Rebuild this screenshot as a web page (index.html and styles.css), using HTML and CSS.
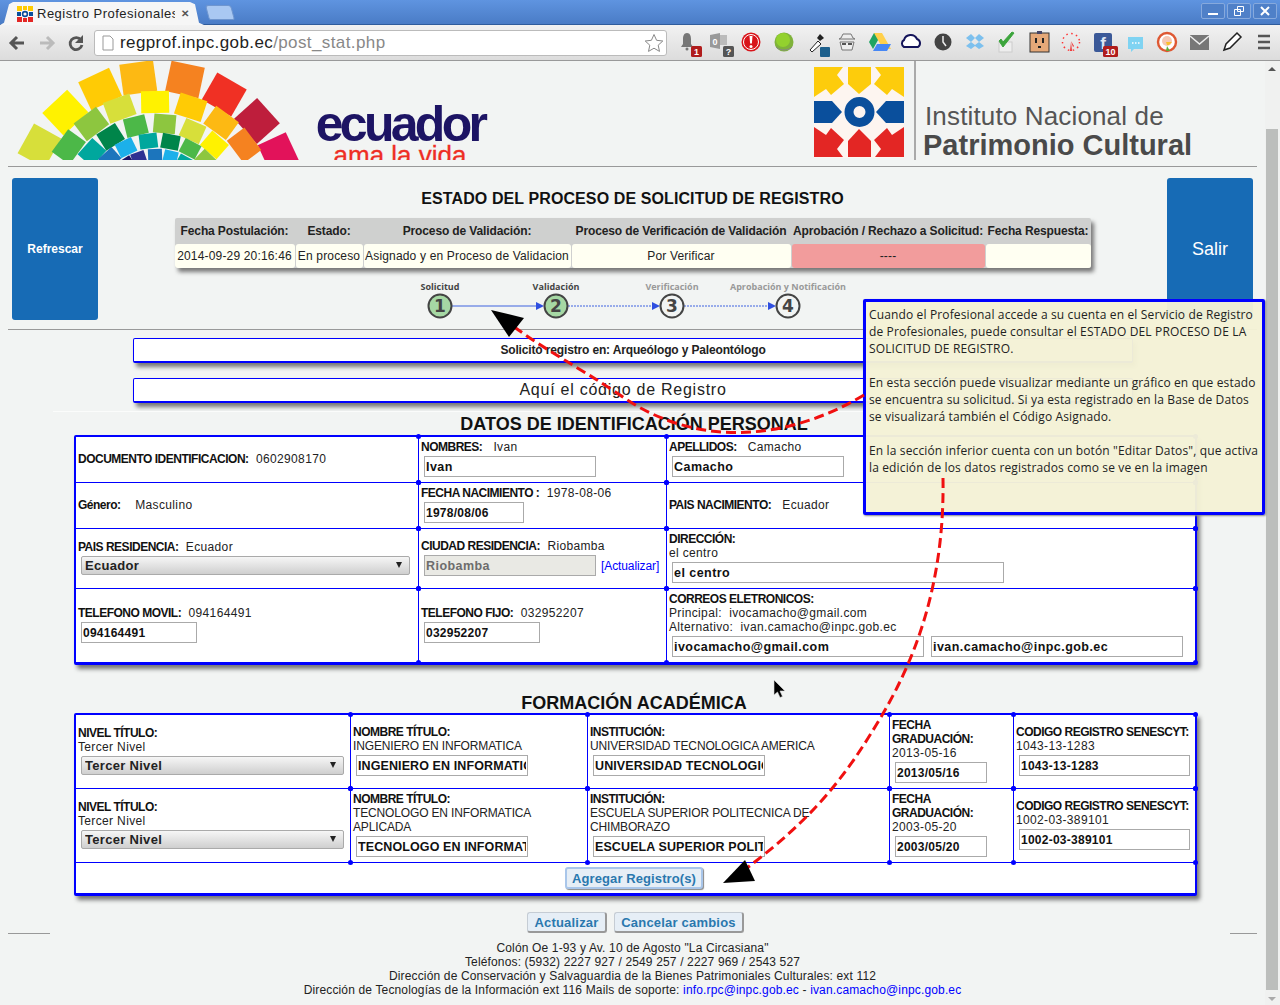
FILE: index.html
```html
<!DOCTYPE html>
<html lang="es">
<head>
    <meta charset="UTF-8">
    <title>Registro Profesionales</title>
    <link rel="stylesheet" href="styles.css">
</head>
<body>
    <div class="tabstrip">
        <div class="tab">
            <svg class="tab-icon" width="16" height="16" viewBox="0 0 16 16">
                <rect width="16" height="16" fill="#fdf5f0"/>
                <rect width="5" height="5" fill="#fc0"/><rect x="6" width="4" height="4" fill="#fc0"/><rect x="11" width="5" height="5" fill="#fc0"/>
                <rect y="6" width="4" height="4" fill="#0a4f9c"/><circle cx="8" cy="8" r="2.4" fill="none" stroke="#0a4f9c" stroke-width="1.6"/><rect x="12" y="6" width="4" height="4" fill="#0a4f9c"/>
                <rect y="11" width="5" height="5" fill="#e32624"/><rect x="6" y="12" width="4" height="4" fill="#e32624"/><rect x="11" y="11" width="5" height="5" fill="#e32624"/>
            </svg>
            <span class="tab-title">Registro Profesionales</span>
            <span class="tab-close">&#10005;</span>
        </div>
        <div class="newtab"></div>
        <div class="winbtns">
            <div class="winbtn"><svg width="12" height="12" viewBox="0 0 12 12"><rect x="1" y="8" width="10" height="2" fill="#fff"/></svg></div>
            <div class="winbtn"><svg width="12" height="12" viewBox="0 0 12 12"><path d="M4.5 1.5h6v5h-6zM1.5 4.5h6v6h-6z" fill="none" stroke="#fff"/></svg></div>
            <div class="winbtn"><svg width="12" height="12" viewBox="0 0 12 12"><path d="M2 2l8 8M10 2l-8 8" stroke="#fff" stroke-width="2"/></svg></div>
        </div>
    </div>

    <div class="toolbar">
        <svg class="nav-icons" width="94" height="24" viewBox="0 0 94 24">
            <path d="M24 12H12M17 6l-6 6 6 6" fill="none" stroke="#555" stroke-width="3"/>
            <path d="M40 12h12M47 6l6 6-6 6" fill="none" stroke="#bbb" stroke-width="3"/>
            <path d="M81 9a6 6 0 1 0 1 5" fill="none" stroke="#555" stroke-width="2.8"/>
            <path d="M83 4v8h-8z" fill="#555"/>
        </svg>
        <div class="omnibox">
            <svg width="12" height="16" viewBox="0 0 12 16"><path d="M1 1h7l3 3v11H1z" fill="#fff" stroke="#999"/></svg>
            <span class="url">regprof.inpc.gob.ec<span class="url-path">/post_stat.php</span></span>
            <svg class="star" width="20" height="20" viewBox="0 0 20 20"><path d="M10 1.5l2.6 5.8 6.2.7-4.6 4.2 1.3 6.2L10 15.2l-5.5 3.2 1.3-6.2L1.200 8l6.200-.7z" fill="#fff" stroke="#888"/></svg>
        </div>
        <svg class="ext-icons" width="608" height="36" viewBox="672 25 608 36">
            <!-- bell -->
            <path d="M687 33c-3 0-4 3-4 6v5l-2 3h12l-2-3v-5c0-3-1-6-4-6z" fill="#777"/><circle cx="687" cy="49" r="1.500" fill="#777"/>
            <rect x="691" y="46" width="11" height="11" rx="1.500" fill="#b01c1c"/><text x="696.500" y="55" class="badge-txt">1</text>
            <!-- outlook -->
            <path d="M710 35l10-2v16l-10-2z" fill="#999"/><rect x="720" y="35" width="7" height="10" fill="#bbb"/><text x="715" y="45" class="badge-txt" fill="#eee">0</text>
            <rect x="723" y="46" width="11" height="11" rx="1.500" fill="#555"/><text x="728.500" y="55" class="badge-txt">?</text>
            <!-- alert -->
            <circle cx="751" cy="42" r="9.500" fill="#d8141a"/><circle cx="751" cy="42" r="7.500" fill="none" stroke="#fff"/><path d="M749.500 36h3l-.6 7.500h-1.800z" fill="#fff"/><circle cx="751" cy="46.500" r="1.500" fill="#fff"/>
            <!-- green ball -->
            <circle cx="784" cy="42" r="9.500" fill="#7fb23a"/><circle cx="783" cy="40" r="7" fill="#93d12e"/><path d="M776 47c4 4 12 4 16 0" fill="none" stroke="#888"/>
            <!-- eyedropper -->
            <path d="M810 50l8-9 3 3-9 8z" fill="#fff" stroke="#222"/><path d="M817 38l3-4 4 4-4 3z" fill="#222"/><rect x="820" y="47" width="10" height="10" rx="1" fill="#1c5f8c"/>
            <!-- spy -->
            <path d="M841 38l2-4h8l2 4 2 1h-16zM840 42h14l-2 8h-10z" fill="#eee" stroke="#777"/><path d="M842 43h4v2h-4zM848 43h4v2h-4z" fill="#555"/>
            <!-- drive -->
            <path d="M874 33h8l-9 16-4-7z" fill="#1fa463"/><path d="M882 33l9 16h-8l-9-16z" fill="#ffd04b"/><path d="M873 51l4-7h14l-4 7z" fill="#4687f4"/>
            <!-- cloud -->
            <path d="M904 47a4 4 0 0 1 0-7 7 7 0 0 1 13-1 4.500 4.500 0 0 1 1 8z" fill="#fff" stroke="#14145a" stroke-width="2"/>
            <!-- clock -->
            <circle cx="943" cy="42" r="8.500" fill="#444"/><path d="M943 36v6l3 4" fill="none" stroke="#eee" stroke-width="1.500"/>
            <!-- dropbox -->
            <path d="M971 34l-5 4 5 4-5 4 5 3 4-3 4 3 5-3-5-4 5-4-5-4-4 4zM971 42l4-4 4 4-4 3z" fill="#7cc0ee"/>
            <!-- check -->
            <rect x="999" y="42" width="13" height="10" fill="#eee" stroke="#ccc"/><path d="M999 41l4 6 11-14-2-1-9 10-2-3z" fill="#3ca53c" stroke="#3ca53c"/>
            <!-- outlet -->
            <rect x="1030" y="33" width="19" height="19" fill="#e5a878" stroke="#333"/><rect x="1037" y="31" width="5" height="3" fill="#446"/><rect x="1035" y="38" width="2" height="5" fill="#222"/><rect x="1042" y="38" width="2" height="5" fill="#222"/><path d="M1038 46h3v2h-3z" fill="#222"/>
            <!-- red clock -->
            <circle cx="1071" cy="42" r="8.500" fill="none" stroke="#f33" stroke-width="1.500" stroke-dasharray="1.500 3.500"/><path d="M1071 42l-1 9h2zM1071 41l3 5-1 1z" fill="#e33"/>
            <!-- facebook -->
            <rect x="1094" y="33" width="18" height="19" rx="2" fill="#3b5998"/><text x="1103" y="49" class="fb-txt">f</text>
            <rect x="1103" y="46" width="15" height="11" rx="1.500" fill="#b01c1c"/><text x="1110.500" y="55" class="badge-txt">10</text>
            <!-- chat -->
            <path d="M1128 37h15v12h-9l-3 3v-3h-3z" fill="#7fd3f2"/><path d="M1132 43h1.500M1135 43h1.500M1138 43h1.500" stroke="#fff" stroke-width="1.500"/>
            <!-- duck -->
            <circle cx="1167" cy="42" r="9" fill="#fff" stroke="#de5833" stroke-width="2.400"/><circle cx="1167" cy="41" r="5" fill="#f6c8b4"/><path d="M1166 42h6l-3 3h-2z" fill="#fbc02d"/><path d="M1167 46l3 5h-4z" fill="#5cae3a"/>
            <!-- mail -->
            <rect x="1190" y="35" width="19" height="15" fill="#777"/><path d="M1190 36l9.500 8 9.500-8" fill="none" stroke="#eee" stroke-width="1.500"/>
            <!-- pen -->
            <path d="M1224 50l2-6 11-11 4 4-11 11z" fill="#fff" stroke="#222" stroke-width="1.500"/>
            <!-- menu -->
            <path d="M1258 36h12M1258 42h12M1258 48h12" stroke="#555" stroke-width="2.500"/>
        </svg>
    </div>

    <div class="viewport">
        <div class="page">
            <header class="site-head">
                <svg class="fan" width="300" height="99" viewBox="0 61 300 99">
                    <g>
                        <rect x="140" y="61" width="34" height="31" fill="#d7df3a" transform="rotate(-61 157 211)"/>
                        <rect x="140" y="61" width="34" height="31" fill="#fff200" transform="rotate(-43 157 211)"/>
                        <rect x="140" y="61" width="34" height="31" fill="#ffcb05" transform="rotate(-25 157 211)"/>
                        <rect x="140" y="61" width="34" height="31" fill="#fdb913" transform="rotate(-8 157 211)"/>
                        <rect x="140" y="61" width="34" height="31" fill="#f58220" transform="rotate(12 157 211)"/>
                        <rect x="140" y="61" width="34" height="31" fill="#f03024" transform="rotate(30 157 211)"/>
                        <rect x="140" y="61" width="34" height="31" fill="#be1e3c" transform="rotate(48 157 211)"/>
                        <rect x="140" y="61" width="34" height="31" fill="#e2125a" transform="rotate(65 157 211)"/>

                        <rect x="143" y="91" width="28" height="22" fill="#4cb848" transform="rotate(-54 157 211)"/>
                        <rect x="143" y="91" width="28" height="22" fill="#8dc63f" transform="rotate(-37 157 211)"/>
                        <rect x="143" y="91" width="28" height="22" fill="#d7df3a" transform="rotate(-20 157 211)"/>
                        <rect x="143" y="91" width="28" height="22" fill="#fff200" transform="rotate(-1 157 211)"/>
                        <rect x="143" y="91" width="28" height="22" fill="#ffcb05" transform="rotate(18 157 211)"/>
                        <rect x="143" y="91" width="28" height="22" fill="#fdb913" transform="rotate(36 157 211)"/>
                        <rect x="143" y="91" width="28" height="22" fill="#f58220" transform="rotate(53 157 211)"/>

                        <rect x="146" y="114" width="22" height="19" fill="#00a79d" transform="rotate(-48 157 211)"/>
                        <rect x="146" y="114" width="22" height="19" fill="#00854a" transform="rotate(-32 157 211)"/>
                        <rect x="146" y="114" width="22" height="19" fill="#4cb848" transform="rotate(-14 157 211)"/>
                        <rect x="146" y="114" width="22" height="19" fill="#8dc63f" transform="rotate(5 157 211)"/>
                        <rect x="146" y="114" width="22" height="19" fill="#d7df3a" transform="rotate(24 157 211)"/>
                        <rect x="146" y="114" width="22" height="19" fill="#fff200" transform="rotate(41 157 211)"/>

                        <rect x="148" y="133" width="18" height="15" fill="#1c75bc" transform="rotate(-42 157 211)"/>
                        <rect x="148" y="133" width="18" height="15" fill="#1cb0ea" transform="rotate(-26 157 211)"/>
                        <rect x="148" y="133" width="18" height="15" fill="#00a79d" transform="rotate(-7 157 211)"/>
                        <rect x="148" y="133" width="18" height="15" fill="#00854a" transform="rotate(11 157 211)"/>
                        <rect x="148" y="133" width="18" height="15" fill="#4cb848" transform="rotate(28 157 211)"/>
                        <rect x="148" y="133" width="18" height="15" fill="#8dc63f" transform="rotate(44 157 211)"/>
                        <rect x="148" y="133" width="18" height="15" fill="#ffcb05" transform="rotate(58 157 211)"/>

                        <rect x="150" y="149" width="14" height="12" fill="#1b1464" transform="rotate(-33 157 211)"/>
                        <rect x="150" y="149" width="14" height="12" fill="#2e3192" transform="rotate(-19 157 211)"/>
                        <rect x="150" y="149" width="14" height="12" fill="#1c75bc" transform="rotate(-2 157 211)"/>
                        <rect x="150" y="149" width="14" height="12" fill="#1cb0ea" transform="rotate(14 157 211)"/>
                        <rect x="150" y="149" width="14" height="12" fill="#00a79d" transform="rotate(29 157 211)"/>
                    </g>
                </svg>
                <div class="brand">
                    <div class="brand-name">ecuador</div>
                    <div class="brand-tag">ama la vida</div>
                </div>
                <svg class="inpc-logo" width="90" height="91" viewBox="814 67 90 91">
                    <rect x="814" y="67" width="90" height="91" fill="#fdf5f0"/>
                    <g fill="#fdcc0c">
                        <polygon points="814,67 843,67 837,75 844,84 831,95 826,89 814,97"/>
                        <polygon points="848,67 871,67 871,84 859,94 848,84"/>
                        <polygon points="904,67 875,67 881,75 874,84 887,95 892,89 904,97"/>
                    </g>
                    <g fill="#0a4f9c">
                        <polygon points="814,101 832,101 842,112 832,123 814,123"/>
                        <polygon points="904,101 886,101 876,112 886,123 904,123"/>
                    </g>
                    <circle cx="859.500" cy="112" r="10.500" fill="none" stroke="#0a4f9c" stroke-width="9"/>
                    <g fill="#e32624">
                        <polygon points="814,157 843,157 837,149 844,140 831,128 826,135 814,127"/>
                        <polygon points="859,129 871,141 871,157 848,157 848,141"/>
                        <polygon points="904,157 875,157 881,149 874,140 887,128 892,135 904,127"/>
                    </g>
                </svg>
                <div class="inpc-name">
                    <div class="inpc-line1">Instituto Nacional de</div>
                    <div class="inpc-line2">Patrimonio Cultural</div>
                </div>
            </header>
            <hr class="rule rule-head">

            <section class="status-row">
                <a class="big-btn big-btn-small">Refrescar</a>
                <div class="status-mid">
                    <h2 class="status-title">ESTADO DEL PROCESO DE SOLICITUD DE REGISTRO</h2>
                    <div class="status-table">
                        <div class="st-head">Fecha Postulación:</div>
                        <div class="st-head">Estado:</div>
                        <div class="st-head">Proceso de Validación:</div>
                        <div class="st-head">Proceso de Verificación de Validación</div>
                        <div class="st-head">Aprobación / Rechazo a Solicitud:</div>
                        <div class="st-head">Fecha Respuesta:</div>
                        <div class="st-cell">2014-09-29 20:16:46</div>
                        <div class="st-cell">En proceso</div>
                        <div class="st-cell">Asignado y en Proceso de Validacion</div>
                        <div class="st-cell">Por Verificar</div>
                        <div class="st-cell st-cell-red">----</div>
                        <div class="st-cell"></div>
                    </div>
                    <svg class="steps" width="461" height="44" viewBox="402 276 461 44">
                        <text x="440" y="290" class="step-label">Solicitud</text>
                        <text x="556" y="290" class="step-label">Validación</text>
                        <text x="672" y="290" class="step-label step-label-off">Verificación</text>
                        <text x="788" y="290" class="step-label step-label-off">Aprobación y Notificación</text>
                        <path d="M452 306h84" stroke="#3f62e0" stroke-width="1.200"/>
                        <path d="M568 306h84M684 306h84" stroke="#3f62e0" stroke-dasharray="2 1"/>
                        <path d="M536 302l8 4-8 4zM652 302l8 4-8 4zM768 302l8 4-8 4z" fill="#2f4fe0"/>
                        <circle cx="440" cy="306" r="11.500" class="step-done"/>
                        <circle cx="556" cy="306" r="11.500" class="step-done"/>
                        <circle cx="672" cy="306" r="11.500" class="step-todo"/>
                        <circle cx="788" cy="306" r="11.500" class="step-todo"/>
                        <text x="440" y="312" class="step-num">1</text>
                        <text x="556" y="312" class="step-num">2</text>
                        <text x="672" y="312" class="step-num">3</text>
                        <text x="788" y="312" class="step-num">4</text>
                    </svg>
                </div>
                <a class="big-btn">Salir</a>
            </section>
            <hr class="rule rule-status">

            <div class="info-box info-box-small">Solicitó registro en: Arqueólogo y Paleontólogo</div>
            <div class="info-box info-box-code">Aquí el código de Registro</div>
            <hr class="rule-faint">

            <h2 class="sec-title">DATOS DE IDENTIFICACIÓN PERSONAL</h2>
            <div class="grid-box grid-personal">
                <div class="cell"><p><b>DOCUMENTO IDENTIFICACION:</b>&nbsp;&nbsp;0602908170</p></div>
                <div class="cell"><p><b>NOMBRES:</b>&nbsp;&nbsp; Ivan</p><input class="w172" value="Ivan"></div>
                <div class="cell"><p><b>APELLIDOS:</b>&nbsp;&nbsp; Camacho</p><input class="w172" value="Camacho"></div>

                <div class="cell"><p><b>Género:</b>&nbsp;&nbsp;&nbsp; Masculino</p></div>
                <div class="cell"><p><b>FECHA NACIMIENTO :</b>&nbsp;&nbsp;1978-08-06</p><input class="w100 tight" value="1978/08/06"></div>
                <div class="cell"><p><b>PAIS NACIMIENTO:</b>&nbsp;&nbsp; Ecuador</p></div>

                <div class="cell"><p><b>PAIS RESIDENCIA:</b>&nbsp;&nbsp;Ecuador</p><div class="select-wrap w329"><select><option>Ecuador</option></select></div></div>
                <div class="cell"><p><b>CIUDAD RESIDENCIA:</b>&nbsp;&nbsp;Riobamba</p><div class="inline"><input class="w172" value="Riobamba" disabled><a class="link">[Actualizar]</a></div></div>
                <div class="cell"><p><b>DIRECCIÓN:</b></p><p>el centro</p><input class="w332" value="el centro"></div>

                <div class="cell"><p><b>TELEFONO MOVIL:</b>&nbsp;&nbsp;094164491</p><input class="w116 tight" value="094164491"></div>
                <div class="cell"><p><b>TELEFONO FIJO:</b>&nbsp;&nbsp;032952207</p><input class="w116 tight" value="032952207"></div>
                <div class="cell"><p><b>CORREOS ELETRONICOS:</b></p><p>Principal:&nbsp; ivocamacho@gmail.com</p><p>Alternativo:&nbsp; ivan.camacho@inpc.gob.ec</p><div class="inline inline-mails"><input class="w252" value="ivocamacho@gmail.com"><input class="w252" value="ivan.camacho@inpc.gob.ec"></div></div>
            </div>

            <h2 class="sec-title sec-title-2">FORMACIÓN ACADÉMICA</h2>
            <div class="grid-box grid-academic">
                <div class="cell"><p><b>NIVEL TÍTULO:</b></p><p>Tercer Nivel</p><div class="select-wrap w263"><select><option>Tercer Nivel</option></select></div></div>
                <div class="cell"><p><b>NOMBRE TÍTULO:</b></p><p class="caps">INGENIERO EN INFORMATICA</p><input class="w172" value="INGENIERO EN INFORMATICA"></div>
                <div class="cell"><p><b>INSTITUCIÓN:</b></p><p class="caps">UNIVERSIDAD TECNOLOGICA AMERICA</p><input class="w172" value="UNIVERSIDAD TECNOLOGICA AMERICA"></div>
                <div class="cell"><p><b>FECHA GRADUACIÓN:</b></p><p>2013-05-16</p><input class="w92 tight" value="2013/05/16"></div>
                <div class="cell"><p><b>CODIGO REGISTRO SENESCYT:</b></p><p>1043-13-1283</p><input class="w171 tight" value="1043-13-1283"></div>

                <div class="cell"><p><b>NIVEL TÍTULO:</b></p><p>Tercer Nivel</p><div class="select-wrap w263"><select><option>Tercer Nivel</option></select></div></div>
                <div class="cell"><p><b>NOMBRE TÍTULO:</b></p><p class="caps">TECNOLOGO EN INFORMATICA APLICADA</p><input class="w172" value="TECNOLOGO EN INFORMATICA APLICADA"></div>
                <div class="cell"><p><b>INSTITUCIÓN:</b></p><p class="caps">ESCUELA SUPERIOR POLITECNICA DE CHIMBORAZO</p><input class="w172" value="ESCUELA SUPERIOR POLITECNICA"></div>
                <div class="cell"><p><b>FECHA GRADUACIÓN:</b></p><p>2003-05-20</p><input class="w92 tight" value="2003/05/20"></div>
                <div class="cell"><p><b>CODIGO REGISTRO SENESCYT:</b></p><p>1002-03-389101</p><input class="w171 tight" value="1002-03-389101"></div>

                <div class="add-row"><button class="btn btn-add">Agregar Registro(s)</button></div>
            </div>

            <div class="actions">
                <button class="btn">Actualizar</button>
                <button class="btn">Cancelar cambios</button>
            </div>
            <div class="foot-rules"><hr class="rule rule-short"><hr class="rule rule-short rule-short-r"></div>
            <footer class="site-foot">
                <p>Colón Oe 1-93 y Av. 10 de Agosto "La Circasiana"</p>
                <p>Teléfonos: (5932) 2227 927 / 2549 257 / 2227 969 / 2543 527</p>
                <p>Dirección de Conservación y Salvaguardia de la Bienes Patrimoniales Culturales: ext 112</p>
                <p>Dirección de Tecnologías de la Información ext 116 Mails de soporte: <a class="link">info.rpc@inpc.gob.ec</a> - <a class="link">ivan.camacho@inpc.gob.ec</a></p>
            </footer>
        </div>
        <div class="scrollbar">
            <span class="sb-up"></span>
            <div class="sb-thumb"></div>
            <span class="sb-down"></span>
        </div>

        <div class="note">
            <p>Cuando el Profesional accede a su cuenta en el Servicio de Registro<br>de Profesionales, puede consultar el ESTADO DEL PROCESO DE LA<br>SOLICITUD DE REGISTRO.</p>
            <p>En esta sección puede visualizar mediante un gráfico en que estado<br>se encuentra su solicitud. Si ya esta registrado en la Base de Datos<br>se visualizará también el Código Asignado.</p>
            <p>En la sección inferior cuenta con un botón "Editar Datos", que activa<br>la edición de los datos registrados como se ve en la imagen</p>
        </div>

        <svg class="callouts" width="1280" height="944" viewBox="0 61 1280 944">
            <path d="M864 395C780 445 690 445 620 395C580 368 545 350 513 326" class="callout-line"/>
            <polygon points="491,310 524,318 509,337"/>
            <path d="M943 478C945 600 905 680 870 735C830 800 790 835 747 868" class="callout-line"/>
            <polygon points="745,860 755,881 723,883"/>
            <path d="M774 680v15l3.500-3 2.500 5.500 2.500-1-2.500-5.500h5z" fill="#000" stroke="#ddd" stroke-width=".6"/>
        </svg>
    </div>
</body>
</html>
```

FILE: styles.css
```css
* {
    box-sizing: border-box;
}
html, body {
    height: 1005px;
    overflow: hidden;
}
body {
    margin: 0;
    font-family: "Liberation Sans", Arial, sans-serif;
    font-size: 12px;
    color: #222;
    background-color: #f2f4f3;
}
p {
    margin: 0;
}

/* browser chrome */
.tabstrip {
    display: flex;
    align-items: flex-end;
    height: 25px;
    background: linear-gradient(#5f94e0, #4a7cc6);
    border-bottom: 1px solid #2f5c9c;
}
.tab {
    display: flex;
    align-items: center;
    width: 204px;
    height: 23px;
    margin-bottom: -1px;
    padding: 0 15px 0 17px;
    background-color: #f6f6f6;
    clip-path: polygon(0 100%, 4px 90%, 9px 10%, 13px 0, 190px 0, 195px 10%, 199px 90%, 204px 100%);
    font-size: 13px;
    color: #222;
}
.tab-icon {
    flex: none;
    margin-right: 4px;
}
.tab-title {
    flex: 1;
    overflow: hidden;
    white-space: nowrap;
    letter-spacing: .5px;
}
.tab-close {
    margin-left: 6px;
    font-size: 10px;
    font-weight: bold;
    color: #555;
}
.newtab {
    width: 26px;
    height: 15px;
    margin: 0 0 4px 3px;
    background-color: #a9c8f2;
    border: 1px solid #6f96cf;
    border-radius: 3px 3px 2px 2px;
    transform: skewX(15deg);
}
.winbtns {
    display: flex;
    gap: 2px;
    margin: 0 3px 5px auto;
}
.winbtn {
    display: flex;
    align-items: center;
    justify-content: center;
    width: 24px;
    height: 16px;
    border: 1px solid #86a9dd;
    border-radius: 2px;
    background-color: #4f80c8;
}
.toolbar {
    display: flex;
    align-items: center;
    height: 36px;
    background: linear-gradient(#f2f2f2, #dcdcdc);
    border-bottom: 1px solid #999;
}
.nav-icons {
    flex: none;
}
.omnibox {
    display: flex;
    align-items: center;
    width: 573px;
    height: 26px;
    padding: 0 2px 0 7px;
    background-color: #fff;
    border: 1px solid #bbb;
    border-radius: 3px;
}
.url {
    flex: 1;
    margin-left: 6px;
    font-size: 17px;
    letter-spacing: .4px;
    color: #222;
}
.url-path {
    color: #888;
}
.ext-icons {
    flex: none;
    margin-left: 5px;
}
.badge-txt {
    font: bold 9px "Liberation Sans", sans-serif;
    fill: #fff;
    text-anchor: middle;
}
.fb-txt {
    font: bold 17px "Liberation Sans", sans-serif;
    fill: #dfe6f3;
    text-anchor: middle;
}

/* page */
.viewport {
    position: relative;
    display: flex;
    height: 944px;
}
.page {
    flex: none;
    width: 1265px;
    height: 944px;
    overflow: hidden;
}
.scrollbar {
    position: relative;
    width: 15px;
    background-color: #f0f1f0;
}
.sb-thumb {
    position: absolute;
    top: 68px;
    left: 1px;
    width: 12px;
    height: 861px;
    background-color: #bcbebc;
}
.sb-up, .sb-down {
    position: absolute;
    left: 3px;
    border-left: 4px solid transparent;
    border-right: 4px solid transparent;
}
.sb-up {
    top: 6px;
    border-bottom: 4px solid #555;
}
.sb-down {
    bottom: 4px;
    border-top: 4px solid #aaa;
}

.site-head {
    display: flex;
    align-items: flex-start;
    height: 99px;
    overflow: hidden;
}
.fan {
    flex: none;
}
.brand {
    width: 200px;
    margin-left: 16px;
    padding-top: 40px;
    text-align: center;
}
.brand-name {
    font-size: 50px;
    font-weight: bold;
    line-height: 46px;
    letter-spacing: -3.700px;
    color: #1d1464;
    transform: translateX(-16px);
}
.brand-tag {
    margin-top: -4px;
    font-size: 26px;
    line-height: 24px;
    color: #ee2e24;
    -webkit-text-stroke: .3px #ee2e24;
    transform: translateX(-16px);
}
.inpc-logo {
    flex: none;
    margin: 6px 0 0 298px;
}
.inpc-name {
    height: 99px;
    margin-left: 10px;
    padding: 40px 0 0 9px;
    border-left: 2px solid #aaa;
    color: #555;
    white-space: nowrap;
}
.inpc-line1 {
    font-size: 26px;
    line-height: 30px;
    letter-spacing: .15px;
}
.inpc-line2 {
    margin-left: -2px;
    font-size: 29px;
    font-weight: bold;
    line-height: 29px;
    color: #4a4a4a;
}

.rule {
    height: 1px;
    margin: 0;
    border: 0;
    background-color: #999;
}
.rule-head {
    margin: 6px 8px 0;
}
.rule-status {
    margin: 9px 8px 0;
}
.rule-faint {
    width: 1100px;
    height: 1px;
    margin: 8px 0 0 53px;
    border: 0;
    background-color: #fbfcfb;
}

.status-row {
    display: flex;
    height: 142px;
    margin: 11px 12px 0;
}
.big-btn {
    display: flex;
    flex: none;
    align-items: center;
    justify-content: center;
    width: 86px;
    background-color: #176bb5;
    border-radius: 3px;
    color: #fff;
    font-size: 18px;
}
.big-btn-small {
    font-size: 12px;
    font-weight: bold;
}
.status-mid {
    flex: 1;
    display: flex;
    flex-direction: column;
    align-items: center;
}
.status-title {
    margin: 12px 0 0;
    font-size: 16px;
    line-height: 18px;
    letter-spacing: .1px;
    color: #111;
}
.status-table {
    display: grid;
    grid-template-columns: 120px 67px 207px 219px 193px 105px;
    grid-template-rows: 26px 24px;
    column-gap: 1px;
    margin-top: 10px;
    background-color: #cfd0cf;
    box-shadow: 3px 4px 4px #777;
    border-radius: 2px;
}
.st-head {
    display: flex;
    align-items: center;
    justify-content: center;
    font-weight: bold;
    letter-spacing: -.12px;
    white-space: nowrap;
}
.st-cell {
    display: flex;
    align-items: center;
    justify-content: center;
    background-color: #fffff2;
    border-radius: 3px;
    letter-spacing: .17px;
    white-space: nowrap;
}
.st-cell-red {
    background-color: #f29c9c;
}
.steps {
    margin-top: 8px;
}
.step-label {
    font: bold 9px "Open Sans", sans-serif;
    fill: #444;
    text-anchor: middle;
}
.step-label-off {
    fill: #999;
}
.step-done, .step-todo {
    stroke: #444;
    stroke-width: 2;
}
.step-done {
    fill: #a6d8a4;
}
.step-todo {
    fill: #f2f4f3;
}
.step-num {
    font: bold 17px "DejaVu Sans", sans-serif;
    fill: #444;
    text-anchor: middle;
}

.info-box {
    display: flex;
    align-items: center;
    justify-content: center;
    width: 1000px;
    height: 25px;
    margin-left: 133px;
    background-color: #fff;
    border: 1px solid #00f;
    border-bottom-width: 2px;
    border-radius: 2px;
    box-shadow: 3px 4px 4px #777;
}
.info-box-small {
    margin-top: 8px;
    font-weight: bold;
    letter-spacing: -.15px;
}
.info-box-code {
    margin-top: 15px;
    padding-right: 20px;
    font-size: 16px;
    letter-spacing: .75px;
}

.sec-title {
    margin: 2px 0 1px;
    padding-left: 3px;
    font-size: 18px;
    line-height: 20px;
    text-align: center;
    color: #111;
}
.sec-title-2 {
    margin: 28px 0 0;
}
.grid-box {
    display: grid;
    width: 1123px;
    margin-left: 74px;
    background-color: #fff;
    border: 2px solid #00f;
    border-bottom-width: 3px;
    border-radius: 2px;
    box-shadow: 3px 4px 4px #777;
}
.grid-personal {
    grid-template-columns: 343px 248px 1fr;
    grid-template-rows: 46px 46px 60px 73px;
}
.grid-academic {
    grid-template-columns: 275px 237px 302px 124px 1fr;
    grid-template-rows: 74px 74px 30px;
}
.cell {
    position: relative;
    display: flex;
    flex-direction: column;
    justify-content: center;
    align-items: flex-start;
    padding: 0 2px 2px 2px;
    border-right: 1px solid #00f;
    border-bottom: 1px solid #00f;
    line-height: 14px;
    letter-spacing: .35px;
}
.cell::before, .cell::after {
    content: "";
    position: absolute;
    right: -3px;
    z-index: 1;
    width: 5px;
    height: 5px;
    background-color: #00f;
    border-radius: 50%;
}
.cell::before {
    top: -3px;
}
.cell::after {
    bottom: -3px;
}
.cell b {
    letter-spacing: -.5px;
    color: #111;
}
.cell .caps {
    letter-spacing: -.15px;
}
.grid-personal .cell:nth-child(3n),
.grid-academic .cell:nth-child(5n) {
    border-right: 0;
}
.grid-personal .cell:nth-child(n+10) {
    border-bottom: 0;
}
.cell > input, .select-wrap, .inline {
    margin: 2px 0 0 3px;
}
input {
    height: 21px;
    padding: 1px;
    background-color: #fff;
    border: 1px solid #aaa;
    border-radius: 0;
    font: bold 12.5px "Liberation Sans", sans-serif;
    letter-spacing: .45px;
    color: #111;
}
.grid-academic input {
    letter-spacing: .1px;
}
.cell input.tight {
    font-size: 12px;
    letter-spacing: .25px;
}
input:disabled {
    background-color: #e9e9e4;
    color: #6d6d6d;
}
.select-wrap {
    position: relative;
    height: 19px;
}
.select-wrap::after {
    content: "";
    position: absolute;
    top: 6px;
    right: 8px;
    border-left: 3px solid transparent;
    border-right: 3px solid transparent;
    border-top: 6px solid #222;
}
select {
    appearance: none;
    display: block;
    width: 100%;
    height: 19px;
    padding: 0 0 0 3px;
    background: linear-gradient(#f6f6f6, #cfcfcf);
    border: 1px solid #aaa;
    border-radius: 2px;
    font: bold 13px "Liberation Sans", sans-serif;
    letter-spacing: .3px;
    color: #222;
}
.w92 { width: 92px; }
.w100 { width: 100px; }
.w116 { width: 116px; }
.w171 { width: 171px; }
.w172 { width: 172px; }
.w252 { width: 252px; }
.w263 { width: 263px; }
.w329 { width: 329px; }
.w332 { width: 332px; }
.inline {
    display: flex;
    align-items: center;
    gap: 5px;
}
.inline-mails {
    gap: 7px;
}
.inline-mails input {
    flex: none;
}
.link {
    color: #00f;
}
.inline .link {
    letter-spacing: -.1px;
}
.add-row {
    display: flex;
    grid-column: 1 / -1;
    align-items: center;
    justify-content: center;
    padding-right: 3px;
}
.btn {
    height: 21px;
    padding: 0 4px;
    background-color: #e6eef6;
    border: 1px solid #c5ccd4;
    border-right: 2px solid #999;
    border-bottom: 2px solid #999;
    border-radius: 3px;
    font: bold 13px "Liberation Sans", sans-serif;
    letter-spacing: .2px;
    white-space: nowrap;
    color: #2a78ae;
}
.btn-add {
    width: 138px;
    height: 22px;
    border: 2px solid #a9c6ea;
    box-shadow: 1px 1px 1px #888;
    letter-spacing: .1px;
}
.actions {
    display: flex;
    justify-content: center;
    gap: 7px;
    margin-top: 16px;
    padding-left: 6px;
}
.actions .btn:first-child {
    width: 80px;
}
.actions .btn:last-child {
    width: 130px;
}
.foot-rules {
    display: flex;
    justify-content: space-between;
    padding: 0 8px;
}
.rule-short {
    width: 42px;
}
.rule-short-r {
    width: 27px;
}
.site-foot {
    margin-top: 7px;
    line-height: 14px;
    text-align: center;
    letter-spacing: .15px;
}
.site-foot .link {
    letter-spacing: .15px;
}

/* help note and arrows over the page */
.note {
    position: absolute;
    top: 238px;
    left: 863px;
    z-index: 2;
    display: flex;
    flex-direction: column;
    gap: 17px;
    width: 402px;
    height: 216px;
    padding: 4px 0 0 3px;
    background-color: rgba(244, 242, 214, .97);
    border: 3px solid #00f;
    border-radius: 2px;
    font-family: "Open Sans", sans-serif;
    font-size: 12px;
    line-height: 17px;
    letter-spacing: .14px;
    white-space: nowrap;
    color: #222;
    box-shadow: 1px 1px 2px #888;
}
.callouts {
    position: absolute;
    top: 0;
    left: 0;
    z-index: 3;
    pointer-events: none;
}
.callout-line {
    fill: none;
    stroke: #f01010;
    stroke-width: 3;
    stroke-dasharray: 10 5;
}
```
